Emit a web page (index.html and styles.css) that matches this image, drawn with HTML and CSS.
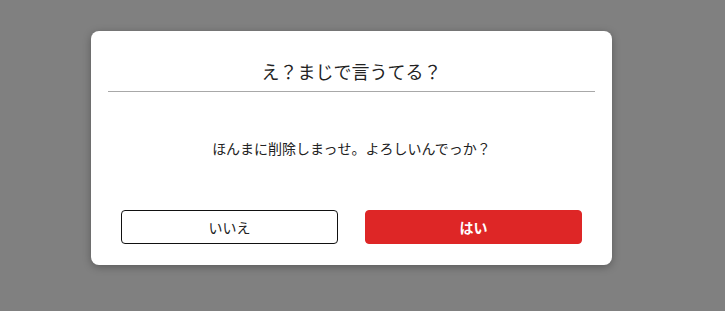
FILE: index.html
```html
<!DOCTYPE html>
<html lang="ja">
<head>
<meta charset="utf-8">
<link rel="stylesheet" href="styles.css">
</head>
<body>
<div class="overlay">
  <div class="dialog">
    <div class="dialog-header">
      <h2 class="dialog-title">え？まじで言うてる？</h2>
    </div>
    <div class="dialog-body">
      <p class="dialog-message">ほんまに削除しまっせ。よろしいんでっか？</p>
    </div>
    <div class="dialog-footer">
      <button class="btn btn-cancel">いいえ</button>
      <button class="btn btn-confirm">はい</button>
    </div>
  </div>
</div>
</body>
</html>
```

FILE: styles.css
```css
html, body {
  margin: 0;
  padding: 0;
  height: 100%;
}
body {
  background: #808080;
  font-family: "Noto Sans CJK JP", "Noto Sans", sans-serif;
  color: #222;
}
.overlay {
  display: flex;
  align-items: flex-start;
  justify-content: flex-start;
  padding: 31px 0 0 91px;
  box-sizing: border-box;
  height: 100%;
}
.dialog {
  width: 521px;
  height: 234px;
  background: #fff;
  border-radius: 8px;
  box-shadow: 0 2px 8px rgba(0, 0, 0, 0.3);
  padding: 0 17px;
  box-sizing: border-box;
  display: flex;
  flex-direction: column;
}
.dialog-header {
  padding: 27px 0 6px;
  border-bottom: 1px solid #a8a8a8;
}
.dialog-title {
  margin: 0;
  font-size: 18px;
  font-weight: normal;
  line-height: 27px;
  text-align: center;
  color: #222;
}
.dialog-body {
  padding-top: 45px;
}
.dialog-message {
  margin: 0;
  font-size: 14px;
  line-height: 22px;
  text-align: center;
  color: #222;
}
.dialog-footer {
  display: flex;
  gap: 27px;
  padding: 0 13px;
  margin-top: 51px;
}
.btn {
  flex: 1;
  height: 34px;
  border-radius: 4px;
  font-family: inherit;
  font-size: 14px;
  cursor: pointer;
  box-sizing: border-box;
}
.btn-cancel {
  background: #fff;
  border: 1px solid #111;
  color: #222;
}
.btn-confirm {
  background: #de2626;
  border: 1px solid #de2626;
  color: #fff;
  font-weight: bold;
}
```
